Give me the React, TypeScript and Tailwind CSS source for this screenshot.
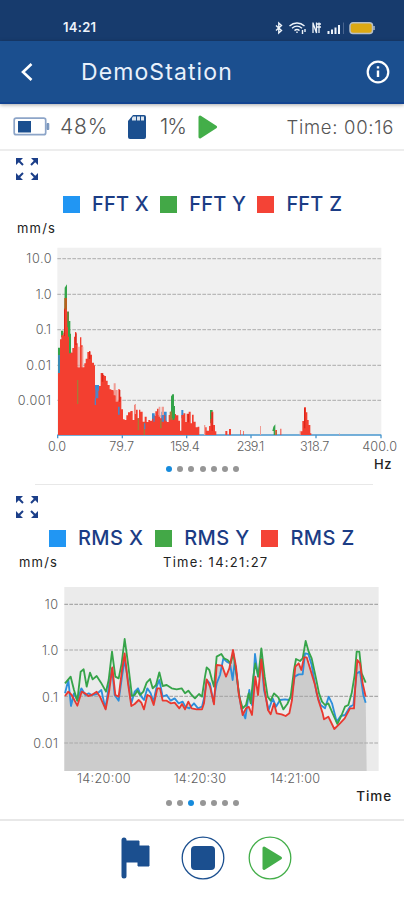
type LegendItem = { label: string; color: string }

type AxisLabel = { text: string; x: number; y: number; width: number }

const fftLegend: LegendItem[] = [
  { label: "FFT X", color: "bg-[#2196f3]" },
  { label: "FFT Y", color: "bg-[#43a847]" },
  { label: "FFT Z", color: "bg-[#f44336]" },
]

const rmsLegend: LegendItem[] = [
  { label: "RMS X", color: "bg-[#2196f3]" },
  { label: "RMS Y", color: "bg-[#43a847]" },
  { label: "RMS Z", color: "bg-[#f44336]" },
]

// Both charts are drawn at three units per pixel.
const fftLabels: AxisLabel[] = [
  { text: "10.0", x: 79, y: 70, width: 76 },
  { text: "1.0", x: 107, y: 177, width: 48 },
  { text: "0.1", x: 107, y: 283, width: 46 },
  { text: "0.01", x: 79, y: 389, width: 74 },
  { text: "0.001", x: 53, y: 495, width: 100 },
  { text: "0.0", x: 144, y: 634, width: 54 },
  { text: "79.7", x: 328, y: 634, width: 74 },
  { text: "159.4", x: 511, y: 634, width: 88 },
  { text: "239.1", x: 710, y: 634, width: 83 },
  { text: "318.7", x: 900, y: 634, width: 88 },
  { text: "400.0", x: 1087, y: 634, width: 104 },
]

const rmsLabels: AxisLabel[] = [
  { text: "10", x: 134, y: 88, width: 40 },
  { text: "1.0", x: 126, y: 226, width: 49 },
  { text: "0.1", x: 126, y: 365, width: 48 },
  { text: "0.01", x: 100, y: 504, width: 74 },
  { text: "14:20:00", x: 231, y: 609, width: 161 },
  { text: "14:20:30", x: 521, y: 609, width: 157 },
  { text: "14:21:00", x: 811, y: 609, width: 149 },
]

// [x, top] steps, each one reaching to the next x
const spectrum: [number, number][] = [
  [174, 398], [180, 298], [184, 286], [190, 278], [192, 205], [201, 215], [206, 262], [209, 335], [214, 338],
  [217, 324], [222, 290], [225, 276], [229, 310], [233, 382], [240, 292], [244, 316], [248, 382], [253, 370],
  [257, 356], [262, 336], [267, 333], [271, 344], [276, 368], [282, 376], [285, 450], [291, 452], [297, 438],
  [302, 399], [308, 405], [313, 408], [318, 422], [323, 435], [329, 448], [334, 450], [341, 454], [346, 466],
  [351, 484], [355, 447], [359, 470], [364, 508], [369, 538], [374, 540], [379, 526], [384, 517], [391, 513],
  [398, 540], [403, 495], [407, 509], [413, 535], [417, 509], [421, 515], [428, 545], [434, 530], [440, 546],
  [445, 540], [450, 542], [456, 536], [461, 528], [466, 514], [471, 506], [476, 525], [481, 535], [485, 530],
  [490, 526], [496, 542], [500, 546], [506, 525], [510, 515], [517, 540], [523, 522], [528, 526], [535, 542],
  [540, 572], [544, 525], [550, 520], [556, 546], [560, 521], [566, 515], [572, 550], [576, 524], [581, 545],
  [587, 562], [593, 560], [598, 585], [615, 562], [620, 572], [627, 558], [631, 537], [634, 515], [640, 555],
  [645, 574], [649, 585], [676, 573], [682, 585], [687, 567], [693, 585], [720, 570], [722, 585], [730, 573],
  [732, 585], [826, 570], [831, 585], [841, 566], [844, 585], [901, 574], [907, 543], [912, 502], [918, 517],
  [922, 540], [926, 555], [931, 580], [934, 585],
]

const spectrumPath = `M174 585${spectrum
  .map(([x, y], i) => `V${y}H${spectrum[i + 1]?.[0] ?? x}`)
  .join("")}V585Z`

const rmsX =
  "195,340 205,300 213,378 222,340 232,362 244,325 256,345 266,340 276,345 290,342 304,330 316,385 328,310 336,265 344,345 356,362 366,290 374,240 384,300 394,370 404,335 414,325 424,350 432,360 442,325 452,340 460,365 470,320 478,300 488,350 500,345 512,362 524,355 536,370 548,365 556,380 568,385 582,370 594,385 606,380 612,355 620,300 630,310 640,365 650,310 660,285 670,235 680,245 690,250 698,300 704,245 714,320 724,385 736,415 748,330 756,375 765,222 774,290 784,235 792,330 806,390 818,355 828,380 840,360 855,358 866,360 874,350 884,290 896,283 908,283 915,220 925,222 935,255 950,340 962,375 975,385 986,350 996,370 1010,425 1022,408 1035,405 1050,380 1060,375 1070,280 1080,275 1090,345 1097,368"
const rmsY =
  "195,310 212,290 222,330 232,362 242,275 251,268 260,320 270,278 278,298 290,288 303,308 318,335 326,300 336,215 346,290 356,295 365,250 374,177 384,250 396,348 404,345 412,332 420,345 430,335 440,308 450,297 458,325 468,315 478,277 488,318 500,315 515,325 530,328 545,325 555,340 565,332 575,345 585,355 597,342 606,350 615,290 620,262 628,270 636,300 642,320 650,230 664,222 672,235 683,240 692,250 700,220 710,285 718,350 728,385 738,375 746,340 752,370 760,290 766,250 775,290 784,205 794,290 803,350 812,362 822,340 835,352 850,388 862,372 872,350 882,270 888,237 900,243 908,235 917,183 926,215 935,235 948,295 957,340 966,365 975,375 985,370 1000,405 1012,432 1025,405 1035,380 1045,375 1055,340 1064,285 1070,215 1078,215 1085,280 1097,308"
const rmsZ =
  "195,348 205,335 215,345 232,377 245,335 255,340 265,348 275,345 290,335 300,350 317,388 328,330 337,262 346,345 356,350 366,270 374,220 384,310 394,378 404,372 416,360 424,368 432,388 442,345 452,350 461,375 472,325 480,325 488,362 500,362 512,370 524,368 538,385 546,372 555,388 565,365 575,385 590,388 606,388 612,370 620,298 630,320 642,373 650,255 666,257 678,290 688,265 699,210 708,260 716,340 728,405 738,385 746,380 756,405 766,290 774,345 784,238 794,330 804,390 812,403 822,370 830,400 845,403 857,408 868,400 876,360 886,260 896,250 904,270 912,232 920,232 930,265 945,315 955,360 968,400 972,418 985,410 1003,447 1020,430 1034,415 1050,385 1062,385 1066,320 1072,240 1080,250 1088,310 1097,350"

function StatusBar() {
  return (
    <div className="flex h-[41px] items-center justify-between bg-[#173b6d] pt-[14px] pr-[29px] pl-[63px] text-[#eef4fb]">
      <span className="text-[13px] font-semibold tracking-[0.3px]">14:21</span>
      <svg width="101" height="14" viewBox="0 0 101 14" fill="none" stroke="currentColor" strokeWidth="1.4">
        <path d="M2 4.500l5.500 5-2.700 2.500V2l2.700 2.500-5.500 5" />
        <path d="M15.500 5c4.500-4 10.500-4 15 0M18 7.300c3-2.600 7-2.600 10 0M20.500 9.600c1.500-1.300 3.500-1.300 5 0" />
        <path d="M23 10.500v1.500M28.500 9v4M31 8v3" />
        <path d="M39 1.500v10.500M39 2l3.500 10V1.500M45 1.500v10.500M42 3h5M43 6h4" strokeWidth="1.300" />
        <path d="M54.500 10v3M58 8.500V13M61.500 6.500V13M65 4V13" strokeWidth="2" />
        <path d="M69.500 1.500V13" stroke="#49658f" strokeWidth="1" />
        <rect x="76" y="1.800" width="22.500" height="10.600" rx="3" stroke="#b6bfc8" strokeWidth="1.500" fill="#dca914" />
        <path d="M100 5v4" stroke="#b6bfc8" strokeWidth="1.500" />
      </svg>
    </div>
  )
}

function AppBar() {
  return (
    <header className="relative flex h-[63px] items-center border-b-2 border-[#134491] bg-[#1b4f8f] pr-[14px] pl-5 text-white shadow-[0_1px_4px_rgba(0,0,0,0.35)]">
      <svg width="14" height="20" viewBox="0 0 14 20" fill="none" stroke="currentColor" strokeWidth="2.600">
        <path d="M11.500 2L3 10l8.500 8" />
      </svg>
      <h1 className="ml-[47px] pt-[2px] text-[23px] tracking-[1.100px] text-[#e9f1fb]">DemoStation</h1>
      <svg className="ml-auto" width="24" height="24" viewBox="0 0 24 24" fill="none" stroke="currentColor" strokeWidth="2.200">
        <circle cx="12" cy="12" r="10.300" />
        <path d="M12 10.500v6.500M12 6.300v2.300" strokeWidth="2.400" />
      </svg>
    </header>
  )
}

function DeviceStatus() {
  return (
    <div className="flex h-[47px] items-center border-b-2 border-[#ededed] pr-[10px] pl-[13px] text-[#555]">
      <svg width="37" height="20" viewBox="0 0 37 20">
        <rect x="1.200" y="1.200" width="31.500" height="16.500" rx="2" fill="#fff" stroke="#8da5c8" strokeWidth="1.700" />
        <path d="M34 6.500h1.800v6H34z" fill="#7895bd" stroke="#7895bd" />
        <path d="M5 4h13v11.500H5z" fill="#1b4f8f" />
      </svg>
      <span className="ml-[10px] w-[67px] text-[21px] font-light tracking-[0.800px]">48%</span>
      <svg width="20" height="26" viewBox="0 0 20 26">
        <path d="M6 1h11q2 0 2 2v20q0 2-2 2H3q-2 0-2-2V7z" fill="#1b4f8f" />
        <path d="M6 2.500h3v4H5V4zM10 2.500h3v4h-3zM14 2.500h3v4h-3z" fill="#dce5ee" />
      </svg>
      <span className="ml-[13px] w-[38px] text-[21px] font-light tracking-[-0.900px]">1%</span>
      <svg width="20" height="24" viewBox="0 0 20 24">
        <path d="M2 2l15.500 10L2 22z" fill="#43ae49" stroke="#43ae49" strokeWidth="3" strokeLinejoin="round" />
      </svg>
      <span className="ml-auto pt-[2px] text-[18.500px] font-light tracking-[0.700px]">Time: 00:16</span>
    </div>
  )
}

function ExpandIcon() {
  return (
    <svg width="22" height="22" viewBox="0 0 22 22" fill="#1c3f89" stroke="#1c3f89" strokeWidth="2">
      <path d="M0 0h7L0 7zM22 0v7l-7-7zM0 22v-7l7 7zM22 22h-7l7-7z" stroke="none" />
      <path d="M2 2l5 5M20 2l-5 5M2 20l5-5M20 20l-5-5" />
    </svg>
  )
}

function Legend({ items, textClass }: { items: LegendItem[]; textClass: string }) {
  return (
    <div className="flex items-center">
      {items.map((item) => (
        <div key={item.label} className="flex items-center">
          <span className={`size-[17px] ${item.color}`} />
          <span className={`ml-3 text-[20px] leading-[24px] font-medium whitespace-nowrap text-[#1b3c85] ${textClass}`}>
            {item.label}
          </span>
        </div>
      ))}
    </div>
  )
}

function PageDots({ active }: { active: number }) {
  return (
    <div className="flex gap-[5.200px] pl-[166px]">
      {[0, 1, 2, 3, 4, 5, 6].map((dot) => (
        <span key={dot} className={`size-[6px] rounded-full ${dot === active ? "bg-[#168bdc]" : "bg-[#969696]"}`} />
      ))}
    </div>
  )
}

function AxisText({ labels }: { labels: AxisLabel[] }) {
  return (
    <g fill="#606060" fontSize="38" fontWeight="300">
      {labels.map((label) => (
        <text key={label.text} x={label.x} y={label.y} textLength={label.width}>
          {label.text}
        </text>
      ))}
    </g>
  )
}

function FftChart() {
  return (
    <svg className="block" width="404" height="216" viewBox="0 0 1212 648">
      <path d="M172 23H1144V585H172z" fill="#f0f0f0" />
      <path
        d="M172 56H1144M172 163H1144M172 269H1144M172 376H1144M172 481H1144"
        stroke="#b9b9b9"
        strokeWidth="4"
        strokeDasharray="11 4"
      />
      <path d="M172 585H1144M173 585V595M367 585V595M560 585V595M753 585V595M948 585V595M1143 585V595" stroke="#4897ce" strokeWidth="4" />
      <path d="M174 345h7v60h-7zM285 435h12v65h-12zM456 520h8v30h-8zM484 515h16v40h-16zM544 510h6v25h-6zM355 495h4v20h-4z" fill="#378bd2" />
      <path d="M174 323h7v24h-7zM183 272h7v20h-7zM194 143l7-10v90h-8zM202 215h5v28h4v38h2v60h-9zM513 470l4-7h5v35h3v45h-12zM630 510h8v40h-8zM820 560l6-7v32h-5v-12h-4z" fill="#33a449" />
      <path d={spectrumPath} fill="#f33f30" />
      <path d="M235 320h4v62h-4zM245 320h5v62h-5zM341 430h6v36h-6zM347 450h6v35h-6zM476 500h5v30h-5zM485 500h7v28h-7zM404 492h4v30h-4zM612 555h4v30h-4zM780 558h3v27h-3zM899 572h3v13h-3zM1017 580h2v5h-2z" fill="#ef9c94" />
      <path d="M193 174h8v35h-8z" fill="#b7601d" />
      <path d="M231 420h4v72h-4zM413 535h4v36h-4zM431 548h4v37h-4zM480 540h5v25h-5zM509 515h9v24h-9zM827 572h3v13h-3z" fill="#a97935" />
      <path d="M286 445h9v30h-9zM284 475h4v20h-4zM354 500h5v24h-5zM460 525h4v20h-4zM485 525h7v20h-7zM432 550h4v18h-4z" fill="#5083c4" />
      <path d="M174 345h6v54h-6z" fill="#398bb4" />
      <path d="M202 215h4v30h4v38h3v57h-6v-50h-3v-28h-2zM514 468h8v42h3v25h-9z" fill="#33a449" />
      <path d="M192 208h3v80h-3zM226 280h4v35h-4zM267 335h4v22h-4zM305 400h5v25h-5zM357 450h4v35h-4zM563 522h4v25h-4zM635 518h3v55h-3zM912 505h4v60h-4z" fill="#dc241a" />
      <AxisText labels={fftLabels} />
    </svg>
  )
}

function RmsChart() {
  return (
    <svg className="block" width="404" height="212" viewBox="0 0 1212 636">
      <path d="M193 21H1136V573H193z" fill="#ebebeb" />
      <polygon points={`193,573 193,348 ${rmsZ} 1100,573`} fill="#cccccc" />
      <path d="M193 73H1136M193 210H1136M193 349H1136M193 489H1136" stroke="#a9a9a9" strokeWidth="3.500" strokeDasharray="11 4" />
      <g fill="none" strokeWidth="5.500" strokeLinejoin="round">
        <polyline points={rmsX} stroke="#2d8fdc" />
        <polyline points={rmsY} stroke="#36a449" />
        <polyline points={rmsZ} stroke="#e93930" />
      </g>
      <AxisText labels={rmsLabels} />
    </svg>
  )
}

function Controls() {
  return (
    <footer className="flex h-[81px] items-center border-t-2 border-[#e8e8e8] pb-[5px] pl-[121px]">
      <svg width="30" height="42" viewBox="0 0 30 42">
        <path d="M3 3v36" stroke="#1b4f8f" strokeWidth="5" strokeLinecap="round" />
        <path d="M4 4h14v5h10v20H17v-4H4z" fill="#1b4f8f" stroke="#1b4f8f" strokeLinejoin="round" />
      </svg>
      <svg className="ml-[30px]" width="44" height="44" viewBox="0 0 44 44" fill="#1b4f8f">
        <circle cx="22" cy="22" r="20.800" fill="#fff" stroke="#1b4f8f" strokeWidth="1.300" />
        <rect x="10" y="10" width="24" height="24" rx="4" />
      </svg>
      <svg className="ml-[23px]" width="44" height="44" viewBox="0 0 44 44" fill="#43ae49">
        <circle cx="22" cy="22" r="20.800" fill="#fff" stroke="#43ae49" strokeWidth="1.300" />
        <path d="M16 12l16.500 10L16 32.500z" stroke="#43ae49" strokeWidth="3" strokeLinejoin="round" />
      </svg>
    </footer>
  )
}

export default function App() {
  return (
    <div className="h-[900px] w-[404px] overflow-hidden bg-white font-['Inter',sans-serif]">
      <StatusBar />
      <AppBar />
      <DeviceStatus />

      <section className="h-[334px]">
        <div className="flex h-[41px] items-start pt-[7px] pl-4">
          <ExpandIcon />
        </div>
        <div className="pl-[63px]">
          <Legend items={fftLegend} textClass="w-[68.200px] tracking-[0.200px]" />
        </div>
        <div className="flex h-[24px] items-center pt-[2px] pl-[17px] text-[13px] tracking-[1.200px] text-[#222]">mm/s</div>
        <FftChart />
        <div className="flex h-[28px] items-start justify-between pr-[12px]">
          <div className="pt-[10px]">
            <PageDots active={0} />
          </div>
          <span className="text-[13px] leading-[16px] font-medium tracking-[0.500px] text-[#222]">Hz</span>
        </div>
        <div className="mr-[31px] ml-[35px] h-px bg-[#e8e8e8]" />
      </section>

      <section className="h-[334px]">
        <div className="flex h-[41px] items-start pt-[11px] pl-4">
          <ExpandIcon />
        </div>
        <div className="pl-[49px]">
          <Legend items={rmsLegend} textClass="w-[77.200px] tracking-[0.400px]" />
        </div>
        <div className="flex h-[30px] items-center pb-[4px] pl-[19px] text-[13px] text-[#222]">
          <span className="w-[144px] tracking-[1.200px]">mm/s</span>
          <span className="tracking-[1.280px]">Time: 14:21:27</span>
        </div>
        <RmsChart />
        <div className="flex h-[26px] items-start justify-between pr-[12px]">
          <div className="pt-[8px]">
            <PageDots active={2} />
          </div>
          <span className="-mt-[4px] text-[13.500px] leading-[16px] font-medium tracking-[0.900px] text-[#222]">Time</span>
        </div>
      </section>

      <Controls />
    </div>
  )
}
